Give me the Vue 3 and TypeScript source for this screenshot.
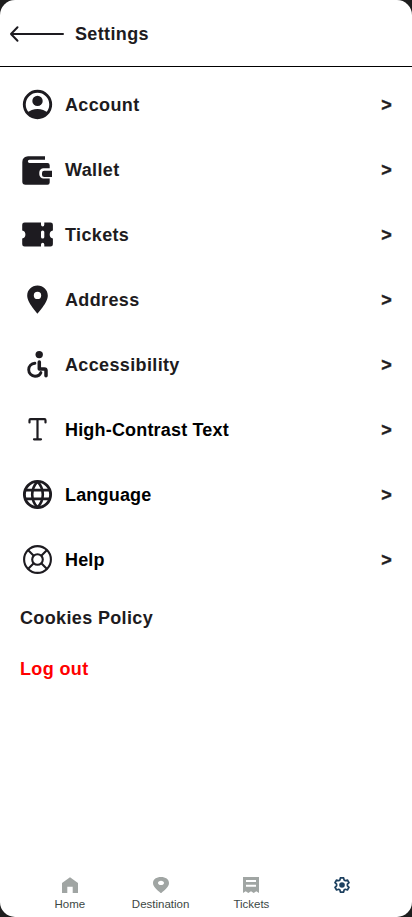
<script setup lang="ts">
interface SettingRow {
  icon: string
  label: string
  strong?: boolean
}

const rows: SettingRow[] = [
  { icon: 'account', label: 'Account' },
  { icon: 'wallet', label: 'Wallet' },
  { icon: 'tickets', label: 'Tickets' },
  { icon: 'address', label: 'Address' },
  { icon: 'accessibility', label: 'Accessibility' },
  { icon: 'text', label: 'High-Contrast Text', strong: true },
  { icon: 'language', label: 'Language', strong: true },
  { icon: 'help', label: 'Help', strong: true },
]
</script>

<template>
  <main class="screen">
    <header class="header">
      <svg class="back" viewBox="0 0 56 18" fill="none" stroke="#1d1b20" stroke-width="2" stroke-linecap="round" stroke-linejoin="round">
        <path d="M54 9H2M8.500 2.300L2 9L8.500 15.700" />
      </svg>
      <h1 class="title">Settings</h1>
    </header>

    <ul class="list">
      <li v-for="row in rows" :key="row.icon" class="row">
        <svg class="icon" viewBox="0 0 35 35" fill="#1d1b20">
          <template v-if="row.icon === 'account'">
            <circle cx="17.500" cy="17.500" r="13.200" fill="none" stroke="#1d1b20" stroke-width="2.900" />
            <circle cx="17.500" cy="13.900" r="5.200" />
            <path d="M7.300 25.600C9.800 23.300 13.500 21.900 17.500 21.900S25.200 23.300 27.700 25.600C25.500 29.400 21.500 31.500 17.500 31.500S9.500 29.400 7.300 25.600Z" />
          </template>
          <template v-else-if="row.icon === 'wallet'">
            <path d="M8 4.200H25V7.700H9.500A1.650 1.650 0 0 0 9.500 11H27.500A2.200 2.200 0 0 1 29.700 13.200V16.200H23.500A4.200 4.200 0 0 0 19.300 20.400V22.300A4.200 4.200 0 0 0 23.500 26.500H29.700V30.500A2.200 2.200 0 0 1 27.500 32.700H5.500A3.200 3.200 0 0 1 2.300 29.500V9.900A5.700 5.700 0 0 1 8 4.200Z" />
            <path d="M24.300 18.700H32V25H24.300A2.300 2.300 0 0 1 22 22.700V21A2.300 2.300 0 0 1 24.300 18.700Z" />
          </template>
          <template v-else-if="row.icon === 'tickets'">
            <path d="M4.600 5.400H21V7.500Q21 9.400 22.700 9.400T24.300 7.500V5.400H30.500A2.400 2.400 0 0 1 32.900 7.800V13.500A4.100 4.100 0 0 0 32.900 21.500V27.200A2.400 2.400 0 0 1 30.500 29.600H24.300V27.500Q24.300 25.700 22.700 25.700T21 27.500V29.600H4.600A2.400 2.400 0 0 1 2.200 27.200V21.500A4.100 4.100 0 0 0 2.200 13.500V7.800A2.400 2.400 0 0 1 4.600 5.400Z" />
            <rect x="21" y="13.500" width="3.300" height="8" rx="1.600" fill="#fff" />
          </template>
          <template v-else-if="row.icon === 'address'">
            <path fill-rule="evenodd" d="M17.500 3.600C23.300 3.600 27.800 8 27.800 13.700C27.800 20.500 17.500 31.600 17.500 31.600S7.200 20.500 7.200 13.700C7.200 8 11.700 3.600 17.500 3.600ZM17.500 9.700A3.700 3.700 0 1 0 17.500 17.100A3.700 3.700 0 0 0 17.500 9.700Z" />
          </template>
          <template v-else-if="row.icon === 'accessibility'">
            <circle cx="19.200" cy="7.600" r="3.700" />
            <path d="M14.900 16.300C11.300 16.600 8.700 19.300 8.700 22.800C8.700 26.400 11.500 29.200 15 29.200C17.900 29.200 20 27.800 20.900 25.600" fill="none" stroke="#1d1b20" stroke-width="2.900" stroke-linecap="round" />
            <path d="M19.300 15.100V21.900H24.300Q26 21.900 26 23.600V28.700" fill="none" stroke="#1d1b20" stroke-width="3.500" stroke-linecap="round" stroke-linejoin="round" />
          </template>
          <template v-else-if="row.icon === 'text'">
            <path d="M9.500 10.400V8.300Q9.500 7.200 10.600 7.200H24.400Q25.500 7.200 25.500 8.300V10.400M17.500 7.200V27.200M14 27.300H21" fill="none" stroke="#1d1b20" stroke-width="2.200" stroke-linecap="round" />
          </template>
          <template v-else-if="row.icon === 'language'">
            <g fill="none" stroke="#1d1b20" stroke-width="2.900">
              <circle cx="17.500" cy="17.500" r="13.100" />
              <path d="M5.200 13.100H29.800M5.200 21.900H29.800" stroke-width="2.600" />
              <path d="M17.500 4.600C13.700 8.500 12.200 13 12.200 17.500S13.700 26.500 17.500 30.400C21.300 26.500 22.800 22 22.800 17.500S21.300 8.500 17.500 4.600Z" stroke-width="2.600" stroke-linejoin="round" />
            </g>
          </template>
          <template v-else>
            <g fill="none" stroke="#1d1b20" stroke-width="2.100">
              <circle cx="17.500" cy="17.500" r="13.400" />
              <circle cx="17.500" cy="17.500" r="5.300" />
              <path d="M8 8L13.700 13.700M27 8L21.300 13.700M8 27L13.700 21.300M27 27L21.300 21.300" />
            </g>
          </template>
        </svg>
        <span class="label" :class="{ strong: row.strong }">{{ row.label }}</span>
        <span class="chevron">&gt;</span>
      </li>
    </ul>

    <a class="link">Cookies Policy</a>
    <a class="link logout">Log out</a>

    <nav class="nav">
      <a class="tab">
        <svg class="tab-icon" viewBox="0 0 16 16" fill="#a0a5a3"><path d="M8 .3L16 6V16H10.700V9.700H5.300V16H0V6Z" /></svg>
        <span>Home</span>
      </a>
      <a class="tab">
        <svg class="tab-icon" viewBox="0 0 16 16" fill="#a0a5a3"><path fill-rule="evenodd" d="M8 0C12.600 0 16 2.300 16 6.100C16 10 11.500 13.500 8 16.300C4.500 13.500 0 10 0 6.100C0 2.300 3.400 0 8 0ZM8 3.700C6.300 3.700 5 4.700 5 5.900S6.300 8.100 8 8.100S11 7.100 11 5.900S9.700 3.700 8 3.700Z" /></svg>
        <span>Destination</span>
      </a>
      <a class="tab">
        <svg class="tab-icon" viewBox="0 0 16 16" fill="#a0a5a3"><path fill-rule="evenodd" d="M0 0H16V16L13.300 14.300L10.700 16L8 14.300L5.300 16L2.700 14.300L0 16ZM3 3V5H13V3ZM3 7.700V9.700H13V7.700Z" /></svg>
        <span>Tickets</span>
      </a>
      <a class="tab">
        <svg class="tab-icon" viewBox="0 0 16 16" fill="none" stroke="#1d405f" stroke-width="1.700" stroke-linejoin="round">
          <path d="M6.400 .9H9.600L10.100 3L11.300 3.700L13.400 3L15 5.700L13.400 7.200V8.800L15 10.300L13.400 13L11.300 12.300L10.100 13L9.600 15.100H6.400L5.900 13L4.700 12.300L2.600 13L1 10.300L2.600 8.800V7.200L1 5.700L2.600 3L4.700 3.700L5.900 3Z" />
          <circle cx="8" cy="8" r="2.800" fill="#1d405f" stroke="none" />
        </svg>
      </a>
    </nav>
  </main>
</template>

<style>
body {
  background: #1e1e1e;
}
</style>

<style scoped>
.screen {
  box-sizing: border-box;
  width: 412px;
  height: 917px;
  display: flex;
  flex-direction: column;
  background: #fff;
  border-radius: 15px;
  overflow: hidden;
  font-family: "Liberation Sans", Arial, sans-serif;
  font-size: 18px;
  font-weight: 700;
  letter-spacing: 0.36px;
  color: #1d1b20;
}

.header {
  box-sizing: border-box;
  height: 67px;
  flex: none;
  display: flex;
  align-items: center;
  gap: 10px;
  padding: 1px 0 0 9px;
  border-bottom: 1px solid #000;
}

.back {
  width: 56px;
  height: 18px;
}

.title {
  margin: 0;
  font-size: 18px;
  line-height: 20px;
}

.list {
  list-style: none;
  margin: 0;
  padding: 5px 20px 0;
}

.row {
  height: 65px;
  display: flex;
  align-items: center;
  gap: 10px;
}

.icon {
  width: 35px;
  height: 35px;
  flex: none;
}

.label {
  flex: 1;
  line-height: 20px;
}

.strong {
  color: #000;
  letter-spacing: 0.18px;
}

.chevron {
  line-height: 20px;
  -webkit-text-stroke: 0.4px #1d1b20;
}

.link {
  margin: 16px 20px 0;
  line-height: 20px;
}

.logout {
  margin-top: 31px;
  color: #f00;
}

.nav {
  margin-top: auto;
  padding: 0 24.500px 5.500px;
  height: 35px;
  display: flex;
}

.tab {
  flex: 1;
  display: flex;
  flex-direction: column;
  align-items: center;
  gap: 5px;
  font-size: 11.500px;
  font-weight: 400;
  letter-spacing: 0;
  line-height: 13px;
  color: #3c4744;
}

.tab-icon {
  width: 16px;
  height: 16px;
}
</style>
